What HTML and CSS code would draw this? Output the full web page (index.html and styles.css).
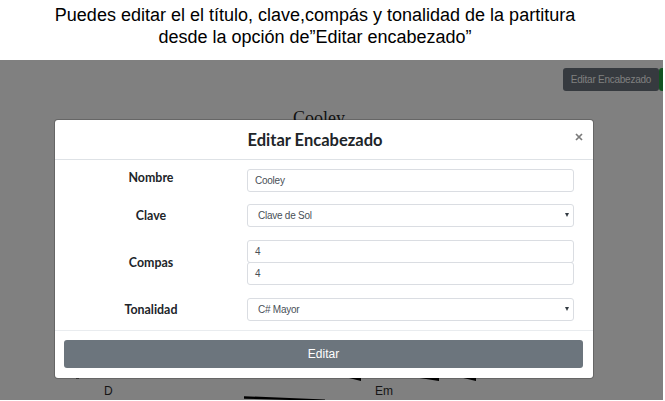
FILE: index.html
```html
<!DOCTYPE html>
<html lang="es">
<head>
<meta charset="utf-8">
<title>Editar Encabezado</title>
<link rel="stylesheet" href="styles.css">
</head>
<body>
<header class="caption">
  <p class="caption-top">Puedes editar el el título, clave,compás y tonalidad de la partitura</p>
  <p class="caption-bottom">desde la opción de”Editar encabezado”</p>
</header>
<main class="stage">
  <div class="toolbar"><span class="tool">Editar Encabezado</span><span class="tool green"></span></div>
  <h1 class="song">Cooley</h1>
  <svg class="score" width="663" height="23" viewBox="0 377 663 23">
    <path d="M76 377h3v1.500h-3zM345 377h16v4zM413 377h26v4zM459 377h17v4z"/>
    <path d="M244 396.200L325 399.600V401L244 398.700Z"/>
    <text x="104" y="395">D</text><text x="375" y="395">Em</text>
  </svg>
  <form class="modal">
    <div class="modal-head">
      <h2>Editar Encabezado</h2>
      <svg class="close" width="8" height="8" viewBox="0 0 8 8"><path d="M1 1l6 6M7 1l-6 6"/></svg>
    </div>
    <div class="fields">
      <span class="label name">Nombre</span>
      <div class="control">Cooley</div>
      <span class="label">Clave</span>
      <div class="control select">Clave de Sol<svg width="4" height="4" viewBox="0 0 4 4"><path d="M0 0h4L2 4z"/></svg></div>
      <span class="label">Compas</span>
      <div class="pair"><div class="control">4</div><div class="control">4</div></div>
      <span class="label">Tonalidad</span>
      <div class="control select">C# Mayor<svg width="4" height="4" viewBox="0 0 4 4"><path d="M0 0h4L2 4z"/></svg></div>
    </div>
    <div class="modal-foot"><button type="button">Editar</button></div>
  </form>
</main>
</body>
</html>
```

FILE: styles.css
```css
* { box-sizing: border-box; }
body { margin: 0; width: 665px; height: 401px; overflow: hidden; background: #fff; font-family: "Liberation Sans", sans-serif; }
p, h1, h2 { margin: 0; }
.caption { height: 60px; width: 630px; padding-top: 4px; text-align: center; font-size: 18px; line-height: 22px; color: #000; white-space: nowrap; }
.stage { position: relative; width: 663px; height: 340px; background: #808080; overflow: hidden; }
.toolbar { display: flex; padding: 8px 0 0 563px; }
.tool { flex: none; width: 96px; height: 23px; border-radius: 3px; background: #363a3f; color: #808080; font-size: 10px; letter-spacing: -.25px; line-height: 23px; text-align: center; white-space: nowrap; }
.tool.green { background: #145322; }
.song { padding: 16px 0 0 293px; font: 18px/22px "Liberation Serif", serif; color: #111; }
.score { position: absolute; left: 0; top: 317px; fill: #000; font-size: 12px; }
.score text { fill: #151515; }
.modal { position: absolute; left: 55px; top: 60px; width: 538px; height: 258px; background: #fff; border-radius: 3px; box-shadow: 0 0 0 1px rgba(0, 0, 0, .2); color: #212529; }
.modal-head { height: 40px; border-bottom: 1px solid #dee2e6; display: flex; justify-content: flex-end; }
.modal-head h2 { width: 345px; padding: 1px 0 0 7.500px; font: 700 16.500px/39px Lato, sans-serif; white-space: nowrap; }
.modal-head .close { flex: none; margin: 13px 10px 0 -10px; }
.close { fill: none; stroke: #7b7b7b; stroke-width: 1.700; }
.fields { display: grid; grid-template-columns: 192px 327px; grid-template-rows: 23px 24px 46px 23px; row-gap: 12px; padding-top: 9px; height: 170px; }
.label { align-self: center; text-align: center; font: 700 12.400px/18px Lato, sans-serif; }
.label.name { padding-bottom: 6px; }
.control { height: 23px; border: 1px solid #dadde2; border-radius: 3px; padding: 0 7px; font-size: 10px; letter-spacing: -.25px; line-height: 22px; color: #495057; }
.select { display: flex; justify-content: space-between; align-items: center; padding: 0 4px 0 10px; }
.select svg { fill: #333b42; margin-bottom: 1px; }
.pair .control + .control { margin-top: -1px; }
.modal-foot { height: 48px; border-top: 1px solid #e9ecef; padding: 9px; }
.modal-foot button { display: block; width: 519px; height: 28px; border: 0; border-radius: 3px; padding: 0; background: #6c757d; color: #fff; font: 12px/28px "Liberation Sans", sans-serif; }
```
